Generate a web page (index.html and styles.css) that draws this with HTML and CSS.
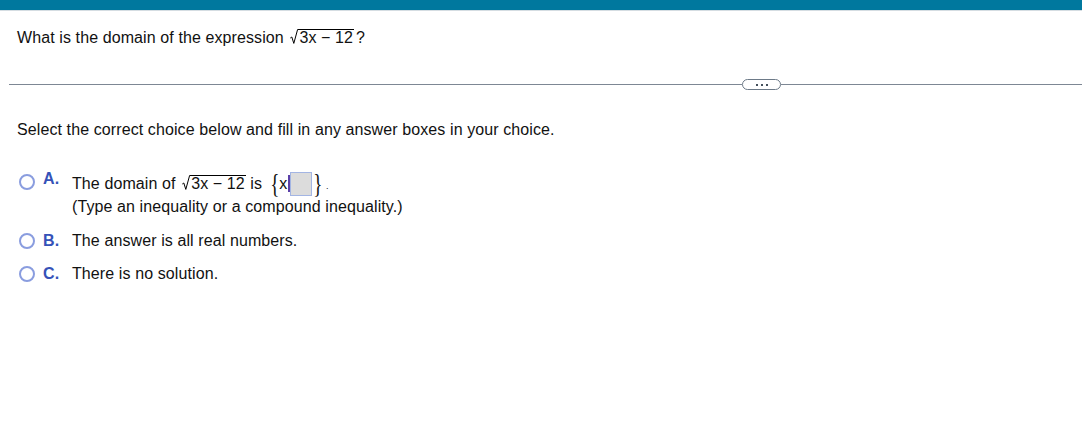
FILE: index.html
```html
<!DOCTYPE html>
<html>
<head>
<meta charset="utf-8">
<link rel="stylesheet" href="styles.css">
</head>
<body>
<div class="topbar"></div>
<div class="question">What is the domain of the expression <span class="sqrt"><svg class="rad" width="8" height="15" viewBox="0 0 8 15"><path d="M0.3 9 L1.8 8 L3.8 14.4 L7.6 0.5 L8 0.5" fill="none" stroke="#000" stroke-width="1"/></svg><span class="radicand">3x − 12</span></span><span class="qmark">?</span></div>
<div class="divider">
  <div class="line"></div>
  <div class="more"><i></i><i></i><i></i></div>
  <div class="line"></div>
</div>
<p class="instr">Select the correct choice below and fill in any answer boxes in your choice.</p>
<div class="choices">
  <div class="choice choice-a">
    <span class="radio"></span><span class="letter">A.</span>
    <div class="body">
      <div class="line1">The domain of <span class="sqrt"><svg class="rad" width="8" height="15" viewBox="0 0 8 15"><path d="M0.3 9 L1.8 8 L3.8 14.4 L7.6 0.5 L8 0.5" fill="none" stroke="#000" stroke-width="1"/></svg><span class="radicand">3x − 12</span></span> is <span class="set"><span class="brace">{</span><span class="xv">x</span><span class="bar"></span><span class="box"></span><span class="brace">}</span></span><span class="dot">.</span></div>
      <div class="line2">(Type an inequality or a compound inequality.)</div>
    </div>
  </div>
  <div class="choice">
    <span class="radio"></span><span class="letter">B.</span>
    <div class="body">The answer is all real numbers.</div>
  </div>
  <div class="choice">
    <span class="radio"></span><span class="letter">C.</span>
    <div class="body">There is no solution.</div>
  </div>
</div>
</body>
</html>
```
FILE: styles.css
```css
html, body { margin: 0; padding: 0; background: #fff; }
body { font-family: "Liberation Sans", Arial, sans-serif; font-size: 16px; letter-spacing: 0.1px; color: #111; width: 1082px; height: 435px; overflow: hidden; }
.topbar { height: 10px; background: #00789e; border-bottom: 1px solid #d5dde2; }
.question { margin: 18px 0 0 17px; height: 18px; line-height: 18px; white-space: nowrap; }
.sqrt { display: inline-block; white-space: nowrap; margin-left: 2px; }
.rad { display: inline-block; vertical-align: -1px; }
.radicand { display: inline-block; border-top: 1px solid #000; line-height: 15px; padding: 0 1px; }
.qmark { margin-left: 2px; }
.divider { display: flex; align-items: center; margin: 32px 0 0 9px; height: 11px; }
.divider .line { height: 1px; background: #7d8794; flex: 0 0 733px; }
.divider .line:last-child { flex: 1 1 auto; }
.more { width: 37px; height: 9px; border: 1px solid #6d7a88; border-radius: 6px; display: flex; justify-content: center; align-items: center; gap: 3px; background: #fff; }
.more i { width: 2px; height: 2px; background: #44505c; display: block; }
.instr { margin: 31px 0 0 17px; line-height: 18px; }
.choices { margin: 33px 0 0 19px; }
.choice { display: flex; align-items: flex-start; line-height: 18px; margin-bottom: 15px; }
.radio { width: 12px; height: 12px; border: 2px solid #8a9ddf; border-radius: 50%; margin-top: 1px; flex: none; }
.letter { color: #3552b8; font-weight: bold; width: 29px; margin-left: 8px; flex: none; }
.choice-a { margin-bottom: 16px; }
.choice-a .radio { margin-top: 2px; }
.choice-a .letter { margin-top: -2px; }
.line1 { height: 24px; line-height: 24px; white-space: nowrap; }
.line2 { margin-top: 2px; }
.set { display: inline-flex; align-items: center; vertical-align: middle; margin-left: 2px; height: 24px; position: relative; top: -1px; }
.brace { font-size: 24px; font-family: "Liberation Serif", serif; line-height: 24px; display: inline-block; transform: scale(0.8, 1.1); }
.xv { line-height: 18px; margin-left: -1px; }
.bar { width: 2px; height: 17px; background: #5a3fa8; margin: 0 0 0 1px; }
.box { width: 20px; height: 22px; background: #dcdcdc; border: 1px solid #a3b5e3; }
.dot { font-size: 9px; margin-left: 2px; }
```
